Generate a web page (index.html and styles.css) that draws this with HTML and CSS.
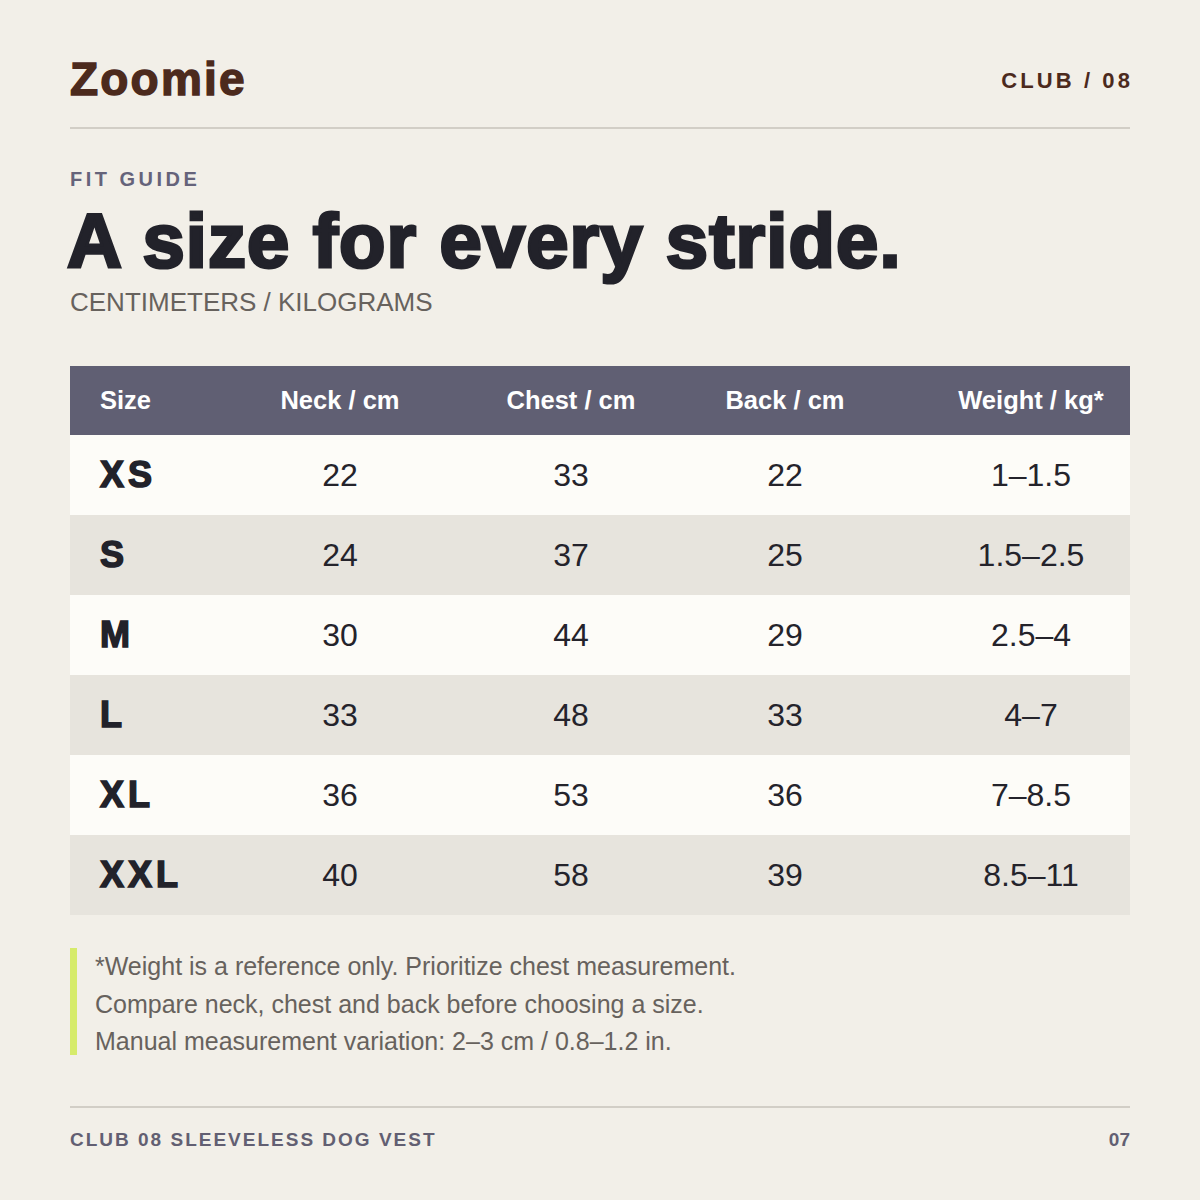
FILE: index.html
```html
<!DOCTYPE html>
<html>
<head>
<meta charset="utf-8">
<link rel="stylesheet" href="styles.css">
</head>
<body>
<div class="page">
  <header class="top">
    <div class="logo">Zoomie</div>
    <div class="club">CLUB / 08</div>
  </header>
  <section class="intro">
    <div class="eyebrow">FIT GUIDE</div>
    <h1 class="title">A size for every stride.</h1>
    <div class="units">CENTIMETERS / KILOGRAMS</div>
  </section>
  <div class="table">
    <div class="row head">
      <div class="c size">Size</div><div class="c">Neck / cm</div><div class="c">Chest / cm</div><div class="c">Back / cm</div><div class="c">Weight / kg*</div>
    </div>
    <div class="row light"><div class="c size">XS</div><div class="c">22</div><div class="c">33</div><div class="c">22</div><div class="c">1–1.5</div></div>
    <div class="row dark"><div class="c size">S</div><div class="c">24</div><div class="c">37</div><div class="c">25</div><div class="c">1.5–2.5</div></div>
    <div class="row light"><div class="c size">M</div><div class="c">30</div><div class="c">44</div><div class="c">29</div><div class="c">2.5–4</div></div>
    <div class="row dark"><div class="c size">L</div><div class="c">33</div><div class="c">48</div><div class="c">33</div><div class="c">4–7</div></div>
    <div class="row light"><div class="c size">XL</div><div class="c">36</div><div class="c">53</div><div class="c">36</div><div class="c">7–8.5</div></div>
    <div class="row dark"><div class="c size">XXL</div><div class="c">40</div><div class="c">58</div><div class="c">39</div><div class="c">8.5–11</div></div>
  </div>
  <div class="note">
    <p>*Weight is a reference only. Prioritize chest measurement.</p>
    <p>Compare neck, chest and back before choosing a size.</p>
    <p>Manual measurement variation: 2–3 cm / 0.8–1.2 in.</p>
  </div>
  <footer class="foot">
    <div>CLUB 08 SLEEVELESS DOG VEST</div>
    <div>07</div>
  </footer>
</div>
</body>
</html>
```
FILE: styles.css
```css
* { box-sizing: border-box; }
html, body { margin: 0; padding: 0; }
body {
  background: #f2efe8;
  font-family: "Liberation Sans", Arial, sans-serif;
  width: 1200px;
  height: 1200px;
}
.page { padding: 0 70px; }
.top {
  display: flex;
  justify-content: space-between;
  align-items: flex-start;
  height: 129px;
  padding-top: 54px;
  border-bottom: 2px solid #d2cec6;
}
.logo {
  font-size: 46px;
  line-height: 50px;
  font-weight: 700;
  color: #4c2a1d;
  -webkit-text-stroke: 1.4px #4c2a1d;
  letter-spacing: 2.2px;
}
.club {
  margin-top: 15px;
  font-size: 22px;
  line-height: 24px;
  font-weight: 700;
  color: #4c2a1d;
  letter-spacing: 3.1px;
  margin-right: -3px;
}
.intro { padding-top: 38px; }
.eyebrow {
  font-size: 20px;
  font-weight: 700;
  letter-spacing: 3.5px;
  color: #65637a;
  line-height: 24px;
}
.title {
  margin: 10px 0 0 -3px;
  font-size: 76px;
  line-height: 80px;
  font-weight: 700;
  color: #22222a;
  -webkit-text-stroke: 3px #22222a;
  letter-spacing: 1.1px;
}
.units {
  font-size: 26px;
  line-height: 30px;
  color: #67625d;
  margin-top: 6px;
}
.table { margin-top: 49px; }
.row {
  display: grid;
  grid-template-columns: 106px 328px 134px 294px 198px;
  align-items: center;
  height: 80px;
}
.row.head {
  background: #605f73;
  height: 69px;
  color: #ffffff;
  font-size: 25.5px;
  font-weight: 700;
}
.row.light { background: #fdfcf8; }
.row.dark { background: #e7e4dd; }
.c { text-align: center; white-space: nowrap; }
.c.size { text-align: left; padding-left: 30px; }
.row.light .c, .row.dark .c {
  font-size: 32px;
  color: #24232b;
}
.row.light .c.size, .row.dark .c.size {
  font-size: 36px;
  font-weight: 700;
  -webkit-text-stroke: 1.5px #22222a;
  letter-spacing: 4px;
  color: #22222a;
}
.note {
  margin-top: 33px;
  border-left: 7px solid #d6eb6b;
  padding: 4px 0 0 18px;
  display: flex;
  flex-direction: column;
  gap: 9.5px;
}
.note p {
  margin: 0;
  font-size: 25px;
  line-height: 28px;
  color: #67625d;
}
.foot {
  margin-top: 51px;
  border-top: 2px solid #d2cec6;
  display: flex;
  justify-content: space-between;
  padding-top: 21px;
  font-size: 19px;
  line-height: 22px;
  font-weight: 700;
  letter-spacing: 2px;
  color: #625f72;
}
.foot div:last-child { letter-spacing: 0; }
```
